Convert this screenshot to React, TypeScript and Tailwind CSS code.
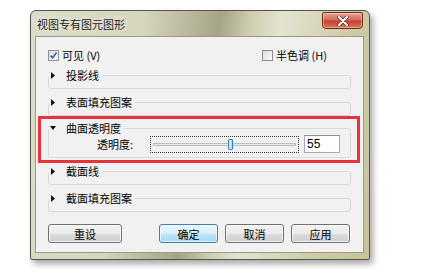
import React from "react"

type BoxProps = { checked?: boolean }

const CheckBox = ({ checked }: BoxProps) => (
  <span className="flex h-[11px] w-[11px] items-center justify-center border border-[#8e8f8f] bg-[linear-gradient(135deg,#dcdcdc,#fbfbfb)]">
    {checked && (
      <svg width="9" height="9" viewBox="0 0 9 9">
        <path d="M1.5 4.6L3.6 6.8L7.6 1.6" fill="none" stroke="#3a5d9c" strokeWidth="1.6" />
      </svg>
    )}
  </span>
)

const Arrow = ({ open }: { open?: boolean }) =>
  open ? (
    <svg width="6" height="4" viewBox="0 0 6 4" className="-ml-[1px]">
      <path d="M0 0H6L3 4Z" fill="#111" />
    </svg>
  ) : (
    <svg width="4" height="7" viewBox="0 0 4 7">
      <path d="M0 0L4 3.5L0 7Z" fill="#111" />
    </svg>
  )

type GroupProps = { title: string; open?: boolean; className?: string; children?: React.ReactNode }

const Group = ({ title, open, className, children }: GroupProps) => (
  <fieldset className={"rounded-[3px] border border-[#d9d9d9] " + (className ?? "")}>
    <legend className="pl-[2px] pr-[4px]">
      <span className="flex h-[14px] items-center">
        <span className="flex w-[15px] items-center">
          <Arrow open={open} />
        </span>
        <span className="leading-[14px]">{title}</span>
      </span>
    </legend>
    {children ?? <div className="h-[6px]" />}
  </fieldset>
)

type BtnProps = { label: string; primary?: boolean; className?: string }

const Button = ({ label, primary, className }: BtnProps) => (
  <button
    type="button"
    className={
      (primary
        ? "border-[#3c7fb1] bg-[linear-gradient(#eaf6fd_0%,#d9f0fc_50%,#bee6fd_51%,#a7d9f5_100%)] "
        : "border-[#707070] bg-[linear-gradient(#f2f2f2_0%,#ebebeb_50%,#dddddd_51%,#cfcfcf_100%)] ") +
      "flex h-[19px] items-center justify-center rounded-[3px] border text-[11px] leading-[14px] text-black shadow-[inset_0_0_0_1px_rgba(255,255,255,0.7)] " +
      (className ?? "")
    }
  >
    {label}
  </button>
)

const App = () => {
  return (
    <main className="h-[276px] w-[426px] bg-white pl-[30px] pt-[10px] font-['Noto_Sans_CJK_SC',sans-serif] text-[11px] text-black">
      <div className="flex h-[250px] w-[340px] flex-col rounded-t-[6px] rounded-b-[2px] border border-[#55574a] bg-[linear-gradient(100deg,#dcdccb_0%,#d6d5bd_30%,#a6a486_50%,#cfcdb0_58%,#e4e3d1_66%,#cdcba3_85%,#c6c497_100%)] shadow-[3px_4px_6px_rgba(0,0,0,0.35)]">
        {/* title bar */}
        <div className="flex h-[25px] items-center justify-between">
          <span className="pl-[6px] text-[11px] leading-[14px] text-[#1c1c1c] [text-shadow:0_0_6px_#fff]">
            视图专有图元图形
          </span>
          <span className="mr-[6px] mt-[1px] flex h-[17px] w-[41px] items-center justify-center self-start rounded-t-[2px] rounded-b-[4px] border border-[#6a2a20] bg-[linear-gradient(#e6a595_0%,#d46a55_45%,#c3412c_55%,#d8775f_100%)] shadow-[inset_0_0_0_1px_rgba(255,255,255,0.4)]">
            <svg width="12" height="10" viewBox="0 0 12 10">
              <path d="M2 1L10 9M10 1L2 9" stroke="#5a2a22" strokeWidth="3.4" strokeLinecap="round" />
              <path d="M2 1L10 9M10 1L2 9" stroke="#fff" strokeWidth="2" strokeLinecap="round" />
            </svg>
          </span>
        </div>

        {/* client area */}
        <div className="mb-[6px] ml-[4px] mr-[5px] flex flex-1 flex-col border border-[#9a9a86] bg-[#f1f1f1] px-[12px] pt-[11px]">
          <div className="flex h-[14px] items-center justify-between">
            <label className="flex items-center gap-[3px]">
              <CheckBox checked />
              <span className="leading-[14px]">可见 (V)</span>
            </label>
            <label className="mr-[24px] flex items-center gap-[3px]">
              <CheckBox />
              <span className="leading-[14px]">半色调 (H)</span>
            </label>
          </div>

          <Group title="投影线" className="mt-[6px]" />
          <Group title="表面填充图案" className="mt-[6px]" />

          <div className="-ml-[10px] -mr-[9px] border-[3px] border-[#e8323c] pb-[2px] pl-[7px] pr-[6px] pt-[2px]">
            <Group title="曲面透明度" open>
              <div className="mb-[4px] flex h-[18px] items-center">
                <span className="ml-[48px] w-[53px] leading-[14px]">透明度:</span>
                <div className="flex h-[17px] w-[149px] items-center border border-dotted border-[#333] px-[2px]">
                  <div className="flex h-[3px] flex-1 items-center border border-[#bdbdbd] bg-[#e9e9e9]">
                    <span className="ml-[74px] h-[11px] w-[5px] rounded-[1px] border border-[#3c7fb1] bg-[linear-gradient(90deg,#e3f2fd,#a9d6f6)]" />
                  </div>
                </div>
                <input
                  readOnly
                  value="55"
                  className="ml-[5px] h-[18px] w-[36px] border border-[#abadb3] border-t-[#8e9196] bg-white pl-[2px] font-['Liberation_Sans',sans-serif] text-[12px] text-black outline-none"
                />
              </div>
            </Group>
          </div>

          <Group title="截面线" className="mt-[1px]" />
          <Group title="截面填充图案" className="mt-[6px]" />

          <div className="mt-[12px] flex items-center justify-between pr-[1px]">
            <Button label="重设" className="w-[74px]" />
            <div className="flex gap-[7px]">
              <Button label="确定" primary className="w-[59px]" />
              <Button label="取消" className="w-[59px]" />
              <Button label="应用" className="w-[59px]" />
            </div>
          </div>
        </div>
      </div>
    </main>
  )
}

export default App
